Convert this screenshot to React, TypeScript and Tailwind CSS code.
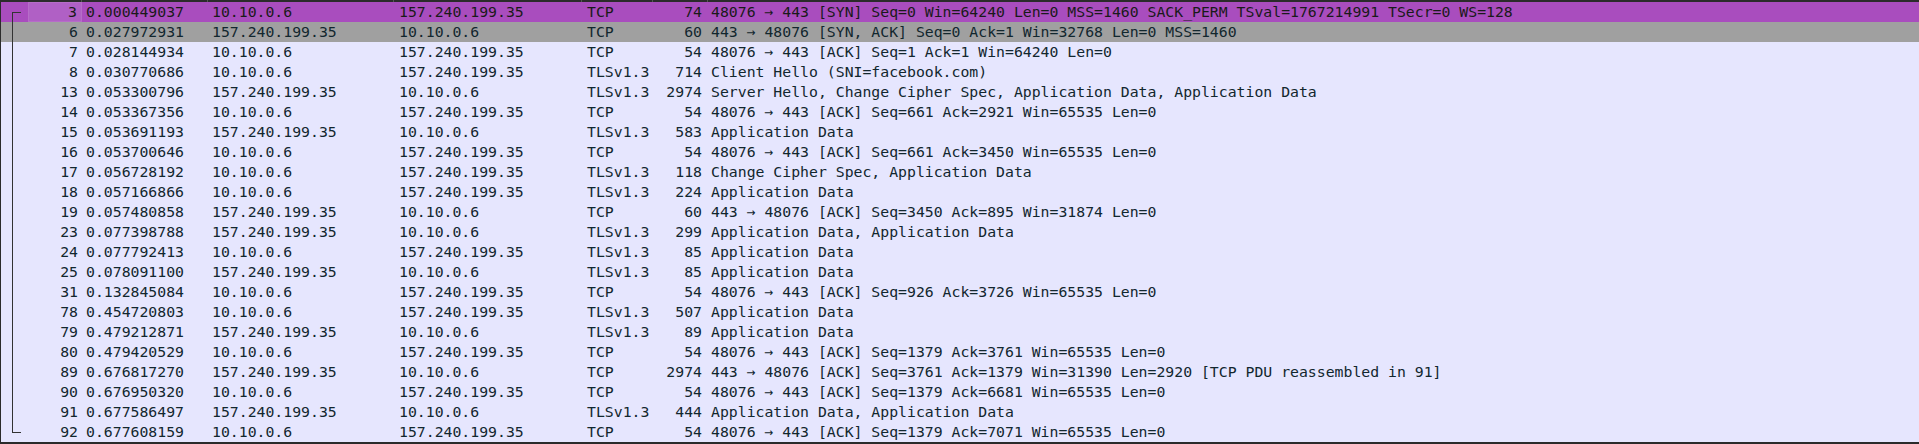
import React from 'react';

type Packet = {
    no: number;
    time: string;
    src: string;
    dst: string;
    proto: string;
    len: number;
    info: string;
    kind: 'selected' | 'syn' | 'tcp';
};

const packets: Packet[] = [
    { no: 3, time: '0.000449037', src: '10.10.0.6', dst: '157.240.199.35', proto: 'TCP', len: 74, info: '48076 → 443 [SYN] Seq=0 Win=64240 Len=0 MSS=1460 SACK_PERM TSval=1767214991 TSecr=0 WS=128', kind: 'selected' },
    { no: 6, time: '0.027972931', src: '157.240.199.35', dst: '10.10.0.6', proto: 'TCP', len: 60, info: '443 → 48076 [SYN, ACK] Seq=0 Ack=1 Win=32768 Len=0 MSS=1460', kind: 'syn' },
    { no: 7, time: '0.028144934', src: '10.10.0.6', dst: '157.240.199.35', proto: 'TCP', len: 54, info: '48076 → 443 [ACK] Seq=1 Ack=1 Win=64240 Len=0', kind: 'tcp' },
    { no: 8, time: '0.030770686', src: '10.10.0.6', dst: '157.240.199.35', proto: 'TLSv1.3', len: 714, info: 'Client Hello (SNI=facebook.com)', kind: 'tcp' },
    { no: 13, time: '0.053300796', src: '157.240.199.35', dst: '10.10.0.6', proto: 'TLSv1.3', len: 2974, info: 'Server Hello, Change Cipher Spec, Application Data, Application Data', kind: 'tcp' },
    { no: 14, time: '0.053367356', src: '10.10.0.6', dst: '157.240.199.35', proto: 'TCP', len: 54, info: '48076 → 443 [ACK] Seq=661 Ack=2921 Win=65535 Len=0', kind: 'tcp' },
    { no: 15, time: '0.053691193', src: '157.240.199.35', dst: '10.10.0.6', proto: 'TLSv1.3', len: 583, info: 'Application Data', kind: 'tcp' },
    { no: 16, time: '0.053700646', src: '10.10.0.6', dst: '157.240.199.35', proto: 'TCP', len: 54, info: '48076 → 443 [ACK] Seq=661 Ack=3450 Win=65535 Len=0', kind: 'tcp' },
    { no: 17, time: '0.056728192', src: '10.10.0.6', dst: '157.240.199.35', proto: 'TLSv1.3', len: 118, info: 'Change Cipher Spec, Application Data', kind: 'tcp' },
    { no: 18, time: '0.057166866', src: '10.10.0.6', dst: '157.240.199.35', proto: 'TLSv1.3', len: 224, info: 'Application Data', kind: 'tcp' },
    { no: 19, time: '0.057480858', src: '157.240.199.35', dst: '10.10.0.6', proto: 'TCP', len: 60, info: '443 → 48076 [ACK] Seq=3450 Ack=895 Win=31874 Len=0', kind: 'tcp' },
    { no: 23, time: '0.077398788', src: '157.240.199.35', dst: '10.10.0.6', proto: 'TLSv1.3', len: 299, info: 'Application Data, Application Data', kind: 'tcp' },
    { no: 24, time: '0.077792413', src: '10.10.0.6', dst: '157.240.199.35', proto: 'TLSv1.3', len: 85, info: 'Application Data', kind: 'tcp' },
    { no: 25, time: '0.078091100', src: '157.240.199.35', dst: '10.10.0.6', proto: 'TLSv1.3', len: 85, info: 'Application Data', kind: 'tcp' },
    { no: 31, time: '0.132845084', src: '10.10.0.6', dst: '157.240.199.35', proto: 'TCP', len: 54, info: '48076 → 443 [ACK] Seq=926 Ack=3726 Win=65535 Len=0', kind: 'tcp' },
    { no: 78, time: '0.454720803', src: '10.10.0.6', dst: '157.240.199.35', proto: 'TLSv1.3', len: 507, info: 'Application Data', kind: 'tcp' },
    { no: 79, time: '0.479212871', src: '157.240.199.35', dst: '10.10.0.6', proto: 'TLSv1.3', len: 89, info: 'Application Data', kind: 'tcp' },
    { no: 80, time: '0.479420529', src: '10.10.0.6', dst: '157.240.199.35', proto: 'TCP', len: 54, info: '48076 → 443 [ACK] Seq=1379 Ack=3761 Win=65535 Len=0', kind: 'tcp' },
    { no: 89, time: '0.676817270', src: '157.240.199.35', dst: '10.10.0.6', proto: 'TCP', len: 2974, info: '443 → 48076 [ACK] Seq=3761 Ack=1379 Win=31390 Len=2920 [TCP PDU reassembled in 91]', kind: 'tcp' },
    { no: 90, time: '0.676950320', src: '10.10.0.6', dst: '157.240.199.35', proto: 'TCP', len: 54, info: '48076 → 443 [ACK] Seq=1379 Ack=6681 Win=65535 Len=0', kind: 'tcp' },
    { no: 91, time: '0.677586497', src: '157.240.199.35', dst: '10.10.0.6', proto: 'TLSv1.3', len: 444, info: 'Application Data, Application Data', kind: 'tcp' },
    { no: 92, time: '0.677608159', src: '10.10.0.6', dst: '157.240.199.35', proto: 'TCP', len: 54, info: '48076 → 443 [ACK] Seq=1379 Ack=7071 Win=65535 Len=0', kind: 'tcp' },
];

const rowBg = {
    selected: 'bg-[#a94dbe] text-[#1a1a1a]',
    syn: 'bg-[#a0a0a0] text-[#12272e]',
    tcp: 'bg-[#e6e6fe] text-[#12272e]',
};

const PacketRow: React.FC<{ p: Packet }> = ({ p }) => {
    const selected = p.kind === 'selected';
    return (
        <div className={`flex h-5 items-center whitespace-pre ${rowBg[p.kind]}`}>
            <div className="w-[27px] shrink-0" />
            <div className={`w-[54px] shrink-0 h-full flex items-center justify-end pr-[4px] ${selected ? 'bg-[#b060c5] border border-[#b66dc8]' : ''}`}>{p.no}</div>
            <div className="w-[126px] shrink-0 pl-[4px]">{p.time}</div>
            <div className="w-[187px] shrink-0 pl-[4px]">{p.src}</div>
            <div className="w-[188px] shrink-0 pl-[4px]">{p.dst}</div>
            <div className="w-[69px] shrink-0 pl-[4px]">{p.proto}</div>
            <div className="w-[55px] shrink-0 pr-[5px] text-right">{p.len}</div>
            <div className="flex-1 pl-[4px]">{p.info}</div>
        </div>
    );
};

export default function App() {
    return (
        <div
            className="relative w-[1919px] h-[444px] bg-[#e6e6fe] border-l border-[#2b2b2b] overflow-hidden text-[14.8px] leading-5"
            style={{ fontFamily: '"DejaVu Sans Mono", "Liberation Mono", monospace' }}
        >
            <div className="flex h-[2px] bg-[#2b2b2b]">
                <div className="w-[81px] shrink-0 border-r border-[#555]" />
                <div className="w-[126px] shrink-0 border-r border-[#555]" />
                <div className="w-[186px] shrink-0 border-r border-[#555]" />
                <div className="w-[188px] shrink-0 border-r border-[#555]" />
                <div className="w-[71px] shrink-0 border-r border-[#555]" />
                <div className="w-[55px] shrink-0 border-r border-[#555]" />
            </div>
            {packets.map(p => (
                <PacketRow key={p.no} p={p} />
            ))}
            <div className="h-[2px] bg-[#2b2b2b]" />
            {/* related-packets bracket */}
            <div className="absolute left-[11px] top-[12px] w-[9px] h-[421px] border-l border-t border-b border-[#333]" />
        </div>
    );
}
